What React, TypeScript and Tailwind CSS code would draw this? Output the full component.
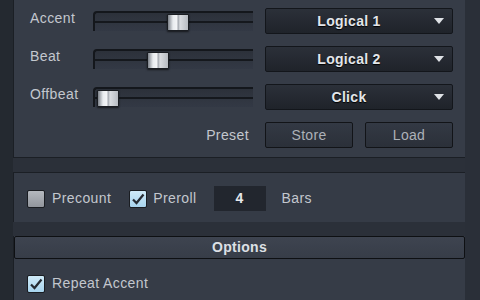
import React from "react"

const font = "font-['Liberation_Sans','Arial',sans-serif]"

function Slider({ pos }: { pos: number }) {
  return (
    <div className="relative w-[160px] h-[20px] border-t-2 border-l-2 border-[#14171c] rounded-tl-[4px] bg-[linear-gradient(180deg,#2c313a,#333945)] flex flex-col justify-center">
      <div className="h-[2px] bg-[#15181d] mb-[1px]" />
      <div
        className="absolute top-[1px] w-[22px] h-[17px] border border-[#1a1d22] rounded-[1px] bg-[linear-gradient(90deg,#7d828a_0%,#e9ecef_25%,#f4f5f7_45%,#9ea3aa_50%,#d9dce0_60%,#b7bbc1_100%)] shadow-[0_1px_2px_rgba(0,0,0,0.6)]"
        style={{ left: pos }}
      />
    </div>
  )
}

function Dropdown({ label }: { label: string }) {
  return (
    <div className="w-[188px] h-[26px] ml-[12px] rounded-[2px] border border-[#13161b] bg-[linear-gradient(180deg,#2b3039,#1f232a)] flex items-center pr-[8px]">
      <span className="flex-1 text-center pl-[2px] text-[14px] font-bold text-[#e3e6ea] tracking-[0.3px] [text-shadow:0_1px_1px_#000]">
        {label}
      </span>
      <svg width="10" height="6" viewBox="0 0 10 6" className="ml-[4px]">
        <path d="M0 0 L10 0 L5 6 Z" fill="#dfe2e6" />
      </svg>
    </div>
  )
}

function Button({ label }: { label: string }) {
  return (
    <div className="w-[88px] h-[26px] ml-[12px] rounded-[2px] border border-[#121418] bg-[linear-gradient(180deg,#333944,#2b3039)] flex items-center justify-center text-[14px] tracking-[0.3px] text-[#acb1b8]">
      {label}
    </div>
  )
}

function Check({ on }: { on: boolean }) {
  return (
    <div
      className={
        on
          ? "w-[18px] h-[18px] rounded-[2px] border border-[#1a1d22] bg-[linear-gradient(180deg,#cfeaf8,#a8d4ee)] flex items-center justify-center"
          : "w-[18px] h-[18px] rounded-[2px] border border-[#1a1d22] bg-[linear-gradient(180deg,#b4b8be,#92969d)]"
      }
    >
      {on && (
        <svg width="14" height="12" viewBox="0 0 14 12">
          <path d="M2 6.5 L5.5 10 L12.5 1.5" stroke="#262b33" strokeWidth="2.2" fill="none" />
        </svg>
      )}
    </div>
  )
}

const rows = [
  { name: "Accent", pos: 72, value: "Logical 1" },
  { name: "Beat", pos: 52, value: "Logical 2" },
  { name: "Offbeat", pos: 2, value: "Click" },
]

export default function App() {
  return (
    <div className={`w-[480px] h-[300px] overflow-hidden flex bg-[#262b33] ${font}`}>
      <div className="w-[13px] shrink-0 bg-[#242930]" />
      <div className="w-[452px] shrink-0 flex flex-col bg-[#2b3039]">
        <div className="h-[158px] shrink-0 bg-[#363c47] border-l border-b border-[#1b1f25] pt-[8px] pl-[16px] pr-[12px] flex flex-col gap-[12px]">
          {rows.map((r) => (
            <div key={r.name} className="h-[26px] flex items-center">
              <span className="w-[63px] mb-[6px] text-[14px] tracking-[0.4px] text-[#c3c7ce]">{r.name}</span>
              <Slider pos={r.pos} />
              <Dropdown label={r.value} />
            </div>
          ))}
          <div className="h-[26px] flex items-center">
            <span className="w-[223px] pr-[4px] text-right text-[14px] tracking-[0.4px] text-[#c3c7ce]">Preset</span>
            <Button label="Store" />
            <Button label="Load" />
          </div>
        </div>

        <div className="mt-[14px] h-[50px] shrink-0 bg-[#353b46] border-t border-l border-[#1b1f25] flex items-center pl-[13px] pt-[2px] text-[14px] tracking-[0.4px] text-[#c3c7ce]">
          <Check on={false} />
          <span className="ml-[7px]">Precount</span>
          <div className="ml-[18px]">
            <Check on={true} />
          </div>
          <span className="ml-[6px]">Preroll</span>
          <div className="ml-[17px] w-[52px] h-[25px] bg-[#22262e] flex items-center justify-center font-bold text-[#e6e8eb]">
            4
          </div>
          <span className="ml-[16px]">Bars</span>
        </div>

        <div className="mt-[14px] flex-1 flex flex-col bg-[#363c47] border-l border-[#1b1f25]">
          <div className="h-[23px] shrink-0 border border-[#0e1013] rounded-[2px] bg-[linear-gradient(180deg,#3e4450,#373d48)] flex items-center justify-center text-[14px] font-bold tracking-[0.3px] text-[#dde0e5]">
            Options
          </div>
          <div className="pt-[14px] pl-[13px] flex items-center text-[14px] tracking-[0.4px] text-[#c3c7ce]">
            <Check on={true} />
            <span className="ml-[7px]">Repeat Accent</span>
          </div>
        </div>
      </div>
      <div className="flex-1 bg-[#2a2f38]" />
    </div>
  )
}
